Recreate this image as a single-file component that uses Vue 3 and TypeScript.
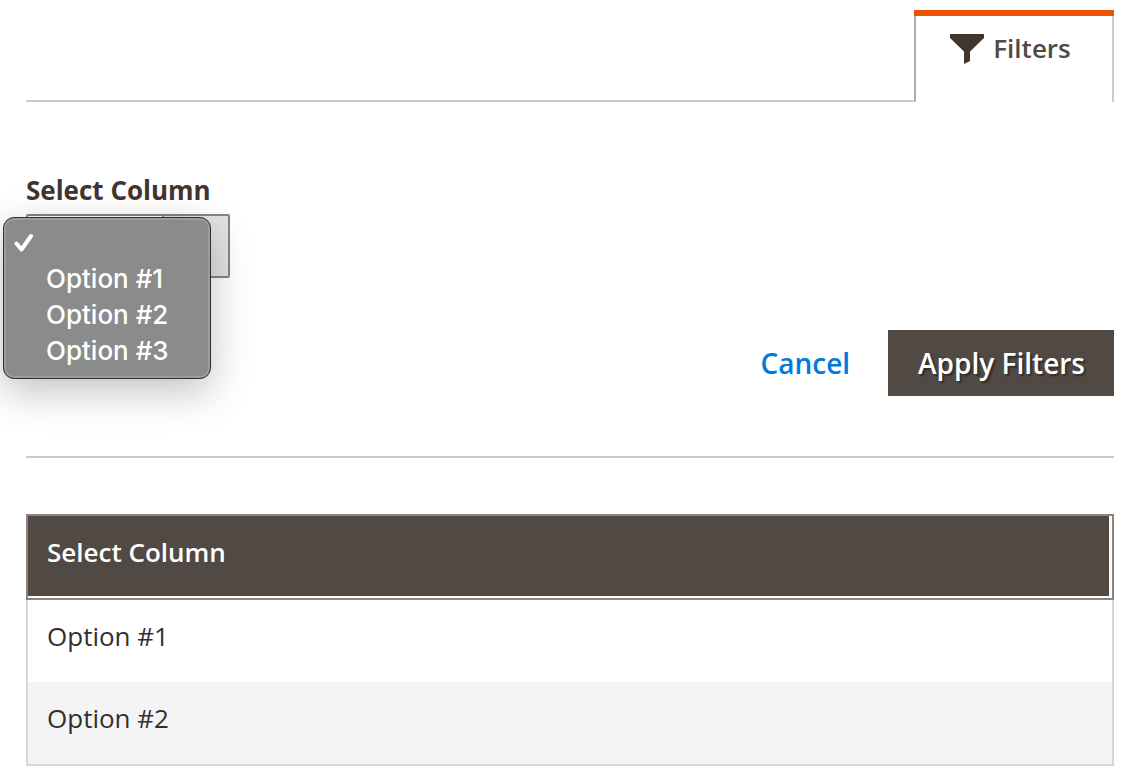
<script setup lang="ts">
import { ref } from 'vue'

const options: string[] = ['', 'Option #1', 'Option #2', 'Option #3']
const rows: string[] = ['Option #1', 'Option #2']
const selected = ref<string>('')
const menuOpen = ref<boolean>(true)

function choose(option: string): void {
  selected.value = option
  menuOpen.value = false
}

function cancel(): void {
  selected.value = ''
}
</script>

<template>
  <main class="page">
    <header class="toolbar">
      <button type="button" class="tab" aria-expanded="true">
        <svg class="funnel" width="34" height="30" viewBox="0 0 34 30" aria-hidden="true">
          <path d="M0 0H34V4L20 17.5V27L14 30V17.5L0 4Z" fill="#41362f" />
        </svg>
        <span>Filters</span>
      </button>
    </header>

    <section class="filters">
      <div class="field">
        <label class="label" for="column">Select Column</label>
        <div class="control">
          <select id="column" v-model="selected" class="select">
            <option v-for="option in options" :key="option" :value="option">{{ option }}</option>
          </select>
          <ul v-if="menuOpen" class="menu">
            <li v-for="option in options" :key="option">
              <button
                type="button"
                class="item"
                :aria-label="option || 'None'"
                @click="choose(option)"
              >
                <span class="mark">
                  <svg v-if="option === selected" width="20" height="20" viewBox="0 0 20 20" aria-hidden="true">
                    <path d="M2.5 10.5L7.5 16.5L17 3" fill="none" stroke="#fff" stroke-width="4" stroke-linecap="round" stroke-linejoin="round" />
                  </svg>
                </span>
                <span>{{ option }}</span>
              </button>
            </li>
          </ul>
        </div>
      </div>
      <div class="actions">
        <button type="button" class="cancel" @click="cancel">Cancel</button>
        <button type="button" class="apply">Apply Filters</button>
      </div>
    </section>

    <table class="grid">
      <thead>
        <tr>
          <th scope="col">Select Column</th>
        </tr>
      </thead>
      <tbody>
        <tr v-for="row in rows" :key="row">
          <td>{{ row }}</td>
        </tr>
      </tbody>
    </table>
  </main>
</template>

<style>
body {
  margin: 0;
  background: #fff;
}
</style>

<style scoped>
.page {
  box-sizing: border-box;
  padding: 10px 10px 10px 26px;
  font-family: 'Open Sans', 'Noto Sans', sans-serif;
  font-size: 26px;
  line-height: 36px;
  color: #303030;
}

button {
  margin: 0;
  border: 0;
  background: none;
  font: inherit;
  cursor: pointer;
}

.toolbar {
  display: flex;
  justify-content: flex-end;
  background: linear-gradient(#ccc, #ccc) left bottom / 100% 2px no-repeat;
}

.tab {
  position: relative;
  display: flex;
  align-items: flex-start;
  justify-content: center;
  gap: 9px;
  box-sizing: border-box;
  width: 200px;
  height: 92px;
  padding: 15px 7px 0 0;
  border-left: 2px solid #adadad;
  border-right: 2px solid #ccc;
  border-radius: 0 0 2px 2px;
  background: #fff;
  color: #514943;
  font-weight: 600;
}

.tab::before {
  content: '';
  position: absolute;
  top: 0;
  left: -2px;
  right: -2px;
  height: 6px;
  background: #eb5202;
}

.tab span {
  margin-top: 5px;
}

.funnel {
  margin-top: 9px;
}

.filters {
  padding-top: 70px;
  padding-bottom: 60px;
  border-bottom: 2px solid #ccc;
}

.label {
  display: block;
  margin-bottom: 6px;
  color: #41362f;
  font-weight: 700;
}

.control {
  position: relative;
  width: 204px;
}

.select {
  display: block;
  appearance: none;
  box-sizing: border-box;
  width: 100%;
  height: 64px;
  padding: 0 70px 0 18px;
  border: 2px solid #858585;
  border-radius: 2px;
  background: linear-gradient(90deg, #fff 134px, #858585 134px, #858585 136px, #e3e3e3 136px);
  font: inherit;
  color: inherit;
}

.menu {
  position: absolute;
  top: 3px;
  left: -23px;
  z-index: 1;
  box-sizing: border-box;
  width: 208px;
  margin: 0;
  padding: 7px 0 9px;
  border: 1px solid #302e2e;
  border-radius: 11px;
  background: #8b8b8b;
  box-shadow: inset 0 0 0 2px #9c9c9c, 0 12px 40px rgba(0, 0, 0, 0.25);
  list-style: none;
  color: #fff;
  font-family: Inter, Roboto, sans-serif;
  font-weight: 500;
}

.item {
  display: flex;
  align-items: center;
  width: 100%;
  height: 36px;
  padding: 0 10px;
  color: #fff;
  text-align: left;
}

.mark {
  display: flex;
  flex: none;
  width: 32px;
}

.actions {
  display: flex;
  justify-content: flex-end;
  align-items: center;
  gap: 38px;
  margin-top: 52px;
  font-size: 28px;
  font-weight: 600;
}

.cancel {
  padding: 0;
  color: #007bdb;
}

.apply {
  padding: 15px 29px 15px 30px;
  background: #514943;
  color: #fff;
  text-shadow: 2px 2px 2px rgba(0, 0, 0, 0.4);
}

.grid {
  width: 100%;
  margin-top: 56px;
  border-spacing: 0;
  text-align: left;
}

th {
  padding: 18px 19px 28px;
  border: 2px solid #8a837f;
  background: #514943;
  box-shadow: inset -3px -2px 0 #fff;
  color: #fff;
  font-weight: 600;
}

td {
  padding: 18px 19px 28px;
  border: solid #d6d6d6;
  border-width: 0 2px;
}

tbody tr:nth-child(even) td {
  background: #f4f4f4;
}

tbody tr:last-child td {
  border-bottom-width: 2px;
}
</style>
